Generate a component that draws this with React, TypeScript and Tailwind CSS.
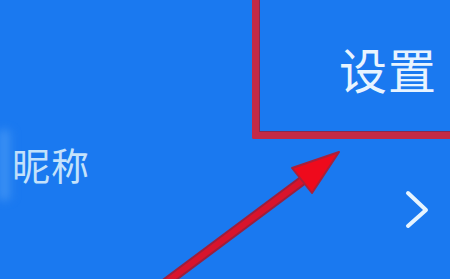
export default function App() {
  return (
    <div
      className="relative w-[450px] h-[279px] overflow-hidden bg-[#1a79f0]"
      style={{ fontFamily: '"Noto Sans CJK SC", "Noto Sans", sans-serif' }}
    >
      {/* Top row with the highlighted settings entry */}
      <div className="flex justify-end h-[139px]">
        <div className="w-[198px] h-full border-l-[7px] border-b-[7px] border-[#c42a47] rounded-bl-[2px] flex items-center pl-[80px] pt-[4px] shadow-[inset_1px_-1px_0_#8a2a50]">
          <span className="text-[48px] leading-none text-[#e8f4ff] tracking-[1px]">设置</span>
        </div>
      </div>

      {/* Nickname row */}
      <div className="flex flex-col">
        <div className="pl-[12px] mt-[6px]">
          <span className="text-[38px] leading-none text-[#c4e2fb] tracking-[1px]">昵称</span>
        </div>
        <div className="flex justify-end pr-[19px] mt-[4px]">
          <svg width="28" height="40" viewBox="0 0 28 40" fill="none">
            <path d="M5 4 L23 21 L5 37" stroke="#e6f4ff" strokeWidth="4" strokeLinecap="round" strokeLinejoin="round" />
          </svg>
        </div>
      </div>

      {/* soft light edge on the left */}
      <div className="absolute left-0 top-[130px] w-[14px] h-[70px] bg-gradient-to-r from-[#4f9ef6] to-transparent blur-[4px]" />

      {/* Annotation arrow */}
      <svg className="absolute inset-0 pointer-events-none" width="450" height="279" viewBox="0 0 450 279">
        <line x1="160" y1="287" x2="306" y2="178" stroke="#9c1f3c" strokeWidth="10" />
        <line x1="160" y1="287" x2="306" y2="178" stroke="#d8142c" strokeWidth="6" />
        <polygon points="339,152 312,193 292,168" fill="#ee0a1c" stroke="#a8203a" strokeWidth="2" strokeLinejoin="round" />
      </svg>
    </div>
  );
}
